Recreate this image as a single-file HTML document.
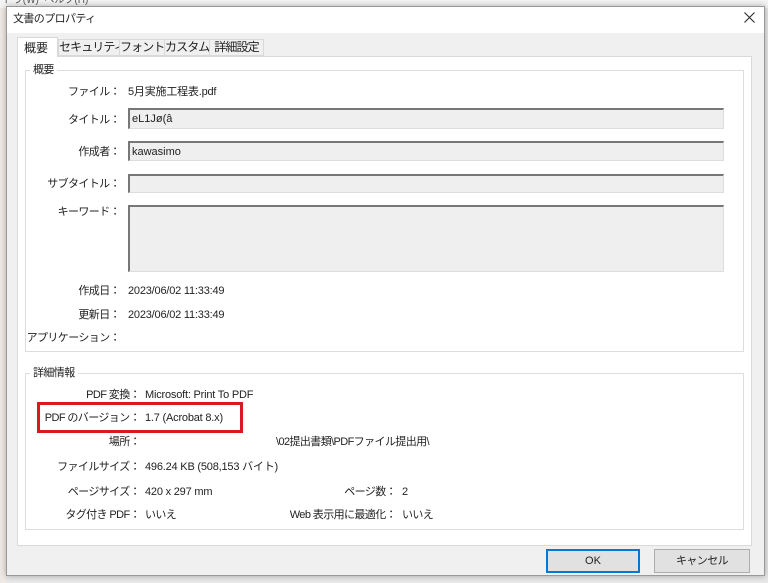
<!DOCTYPE html>
<html><head><meta charset="utf-8"><style>
*{margin:0;padding:0;box-sizing:border-box}
body{width:768px;height:583px;position:relative;overflow:hidden;background:#e8e8e8;font-family:"Liberation Sans","Noto Sans CJK JP",sans-serif;font-size:11px;color:#222}
.a{position:absolute;white-space:nowrap;line-height:14px}
.r{text-align:right;width:120px;letter-spacing:-0.6px}
.l{letter-spacing:-0.6px}
.v{letter-spacing:-0.2px}
.box{position:absolute;background:#efefef;border-top:2px solid #777;border-left:2px solid #777;border-right:1px solid #ddd;border-bottom:1px solid #ddd;padding:2px 2px;line-height:14px}
.tab{position:absolute;top:39px;height:17px;background:#f0f0f0;border:1px solid #d9d9d9;font-size:12px;line-height:15px;text-align:center;letter-spacing:-0.9px;white-space:nowrap;overflow:hidden}
</style></head><body>
<div class="a" style="left:0;top:-6px;width:768px;height:14px;background:#f4f4f4;color:#555;font-size:10px">&nbsp;ドウ(W) &nbsp;ヘルプ(H)</div>
<div class="a" style="left:0;top:8px;width:6px;height:575px;background:#f0e8e4"></div>
<div class="a" style="left:6px;top:6px;width:759px;height:570px;background:#f0f0f0;border:1px solid #999;box-shadow:0 0 6px rgba(0,0,0,.3)"></div>
<div class="a" style="left:7px;top:7px;width:757px;height:26px;background:#fff"></div>
<div class="a l" style="left:13px;top:12px;font-size:11px">文書のプロパティ</div>
<svg class="a" style="left:744px;top:12px" width="11" height="11"><path d="M0.5 0.5L10.5 10.5M10.5 0.5L0.5 10.5" stroke="#333" stroke-width="1.2"/></svg>
<div class="a" style="left:17px;top:56px;width:735px;height:490px;background:#fff;border:1px solid #d9d9d9"></div>
<div class="a" style="left:17px;top:37px;width:41px;height:20px;background:#fff;border:1px solid #d9d9d9;border-bottom:none;padding:3px 0 0 6px;font-size:12px;line-height:14px">概要</div>
<div class="tab" style="left:58px;width:62px">セキュリティ</div>
<div class="tab" style="left:119px;width:46px">フォント</div>
<div class="tab" style="left:164px;width:46px">カスタム</div>
<div class="tab" style="left:209px;width:55px">詳細設定</div>
<div class="a" style="left:25px;top:70px;width:719px;height:282px;border:1px solid #ddd"></div>
<div class="a l" style="left:30px;top:63px;background:#fff;padding:0 3px;font-size:11px">概要</div>
<div class="a r" style="left:0;top:85px">ファイル：</div><div class="a v" style="left:128px;top:85px">5月実施工程表.pdf</div>
<div class="a r" style="left:0;top:113px">タイトル：</div><div class="box" style="left:128px;top:108px;width:596px;height:21px">eL1Jø(â</div>
<div class="a r" style="left:0;top:145px">作成者：</div><div class="box" style="left:128px;top:141px;width:596px;height:20px">kawasimo</div>
<div class="a r" style="left:0;top:177px">サブタイトル：</div><div class="box" style="left:128px;top:174px;width:596px;height:19px"></div>
<div class="a r" style="left:0;top:205px">キーワード：</div><div class="box" style="left:128px;top:205px;width:596px;height:67px"></div>
<div class="a r" style="left:0;top:284px">作成日：</div><div class="a v" style="left:128px;top:284px">2023/06/02 11:33:49</div>
<div class="a r" style="left:0;top:308px">更新日：</div><div class="a v" style="left:128px;top:308px">2023/06/02 11:33:49</div>
<div class="a r" style="left:0;top:331px">アプリケーション：</div>
<div class="a" style="left:25px;top:373px;width:719px;height:157px;border:1px solid #ddd"></div>
<div class="a l" style="left:30px;top:366px;background:#fff;padding:0 3px">詳細情報</div>
<div class="a r" style="left:20px;top:388px">PDF 変換：</div><div class="a v" style="left:145px;top:388px">Microsoft: Print To PDF</div>
<div class="a" style="left:37px;top:402px;width:206px;height:31px;border:3px solid #d9191f"></div>
<div class="a r" style="left:20px;top:411px">PDF のバージョン：</div><div class="a v" style="left:145px;top:411px">1.7 (Acrobat 8.x)</div>
<div class="a r" style="left:20px;top:435px">場所：</div><div class="a l" style="left:276px;top:435px">\02提出書類\PDFファイル提出用\</div>
<div class="a r" style="left:20px;top:460px">ファイルサイズ：</div><div class="a v" style="left:145px;top:460px">496.24 KB (508,153 バイト)</div>
<div class="a r" style="left:20px;top:485px">ページサイズ：</div><div class="a v" style="left:145px;top:485px">420 x 297 mm</div>
<div class="a r" style="left:276px;top:485px">ページ数：</div><div class="a l" style="left:402px;top:485px">2</div>
<div class="a r" style="left:20px;top:508px">タグ付き PDF：</div><div class="a l" style="left:145px;top:508px">いいえ</div>
<div class="a r" style="left:246px;top:508px;width:150px">Web 表示用に最適化：</div><div class="a l" style="left:402px;top:508px">いいえ</div>
<div class="a" style="left:546px;top:549px;width:94px;height:24px;background:#e1e1e1;border:2px solid #0078d7;text-align:center;line-height:20px">OK</div>
<div class="a l" style="left:654px;top:549px;width:96px;height:24px;background:#e1e1e1;border:1px solid #adadad;text-align:center;line-height:22px">キャンセル</div>
</body></html>
